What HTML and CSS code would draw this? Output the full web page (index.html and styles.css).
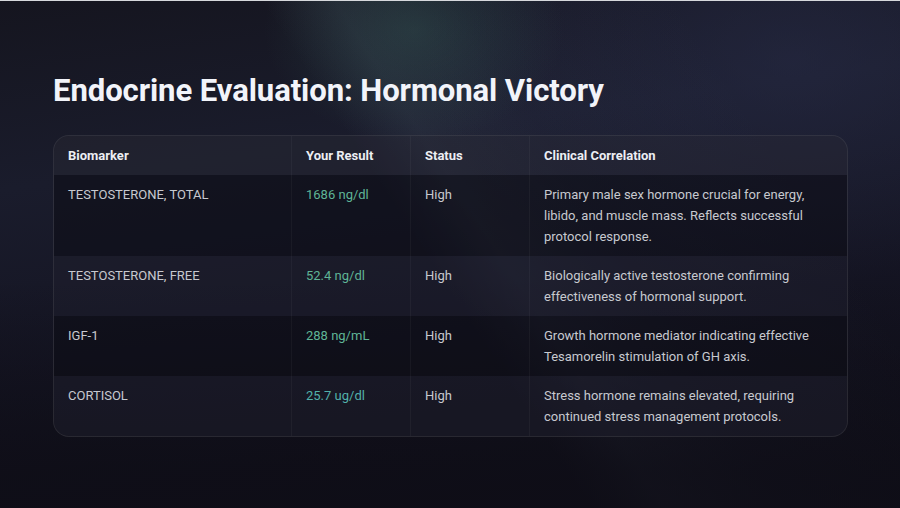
FILE: index.html
```html
<!DOCTYPE html>
<html lang="en">
<head>
<meta charset="utf-8">
<title>Endocrine Evaluation</title>
<link rel="stylesheet" href="styles.css">
</head>
<body>
<main class="slide">
  <h1 class="title">Endocrine Evaluation: Hormonal Victory</h1>
  <div class="table-wrap">
    <table class="results">
      <thead>
        <tr>
          <th class="c1">Biomarker</th>
          <th class="c2">Your Result</th>
          <th class="c3">Status</th>
          <th class="c4">Clinical Correlation</th>
        </tr>
      </thead>
      <tbody>
        <tr class="odd">
          <td>TESTOSTERONE, TOTAL</td>
          <td class="val">1686 ng/dl</td>
          <td>High</td>
          <td>Primary male sex hormone crucial for energy, libido, and muscle mass. Reflects successful protocol response.</td>
        </tr>
        <tr class="even">
          <td>TESTOSTERONE, FREE</td>
          <td class="val">52.4 ng/dl</td>
          <td>High</td>
          <td>Biologically active testosterone confirming effectiveness of hormonal support.</td>
        </tr>
        <tr class="odd">
          <td>IGF-1</td>
          <td class="val">288 ng/mL</td>
          <td>High</td>
          <td>Growth hormone mediator indicating effective Tesamorelin stimulation of GH axis.</td>
        </tr>
        <tr class="even">
          <td>CORTISOL</td>
          <td class="val val-alt">25.7 ug/dl</td>
          <td>High</td>
          <td>Stress hormone remains elevated, requiring continued stress management protocols.</td>
        </tr>
      </tbody>
    </table>
  </div>
</main>
</body>
</html>
```

FILE: styles.css
```css
html, body {
  margin: 0;
  padding: 0;
  height: 100%;
}
body {
  width: 900px;
  height: 508px;
  overflow: hidden;
  border-top: 1px solid #d6d8dc;
  box-sizing: border-box;
  font-family: Roboto, "Noto Sans", sans-serif;
  color: #c7c9cf;
  background:
    linear-gradient(to bottom, rgba(14, 13, 22, 0) 55%, rgba(14, 13, 22, 0.75) 92%),
    radial-gradient(ellipse 200px 150px at 46% 6%, rgba(60, 110, 100, 0.30), rgba(60, 110, 100, 0) 75%),
    linear-gradient(57deg, rgba(0,0,0,0) 48%, rgba(130, 150, 175, 0.10) 54%, rgba(90, 100, 140, 0.06) 64%, rgba(0,0,0,0) 82%),
    radial-gradient(ellipse 460px 280px at 88% 12%, rgba(40, 44, 72, 0.55), rgba(40, 44, 72, 0) 80%),
    linear-gradient(172deg, #15151f 0%, #1a1c2c 30%, #141422 62%, #0e0d16 100%);
}
.slide {
  padding: 71px 54px 0 53px;
}
.title {
  margin: 0 0 26px;
  font-size: 31.1px;
  line-height: 37px;
  font-weight: 700;
  color: #f2f4fa;
  letter-spacing: -0.1px;
}
.table-wrap {
  width: 793px;
  border: 1px solid rgba(255, 255, 255, 0.10);
  border-radius: 16px;
  overflow: hidden;
  background: rgba(20, 20, 32, 0.35);
}
.results {
  width: 100%;
  border-collapse: collapse;
  table-layout: fixed;
  font-size: 13px;
  line-height: 21px;
}
.results th {
  text-align: left;
  font-weight: 700;
  color: #eceef3;
  padding: 9px 14px 9px;
  background: rgba(255, 255, 255, 0.04);
}
.results td {
  vertical-align: top;
  padding: 9px 14px;
}
.results th + th,
.results td + td {
  border-left: 1px solid rgba(255, 255, 255, 0.04);
}
.c1 { width: 209px; }
.c2 { width: 90px; }
.c3 { width: 90px; }
.results tr.odd td { background: rgba(8, 8, 16, 0.32); }
.results tr.even td { background: rgba(40, 40, 55, 0.30); }
.val { color: #5fb596; }
.val-alt { color: #52b1aa; }
```
